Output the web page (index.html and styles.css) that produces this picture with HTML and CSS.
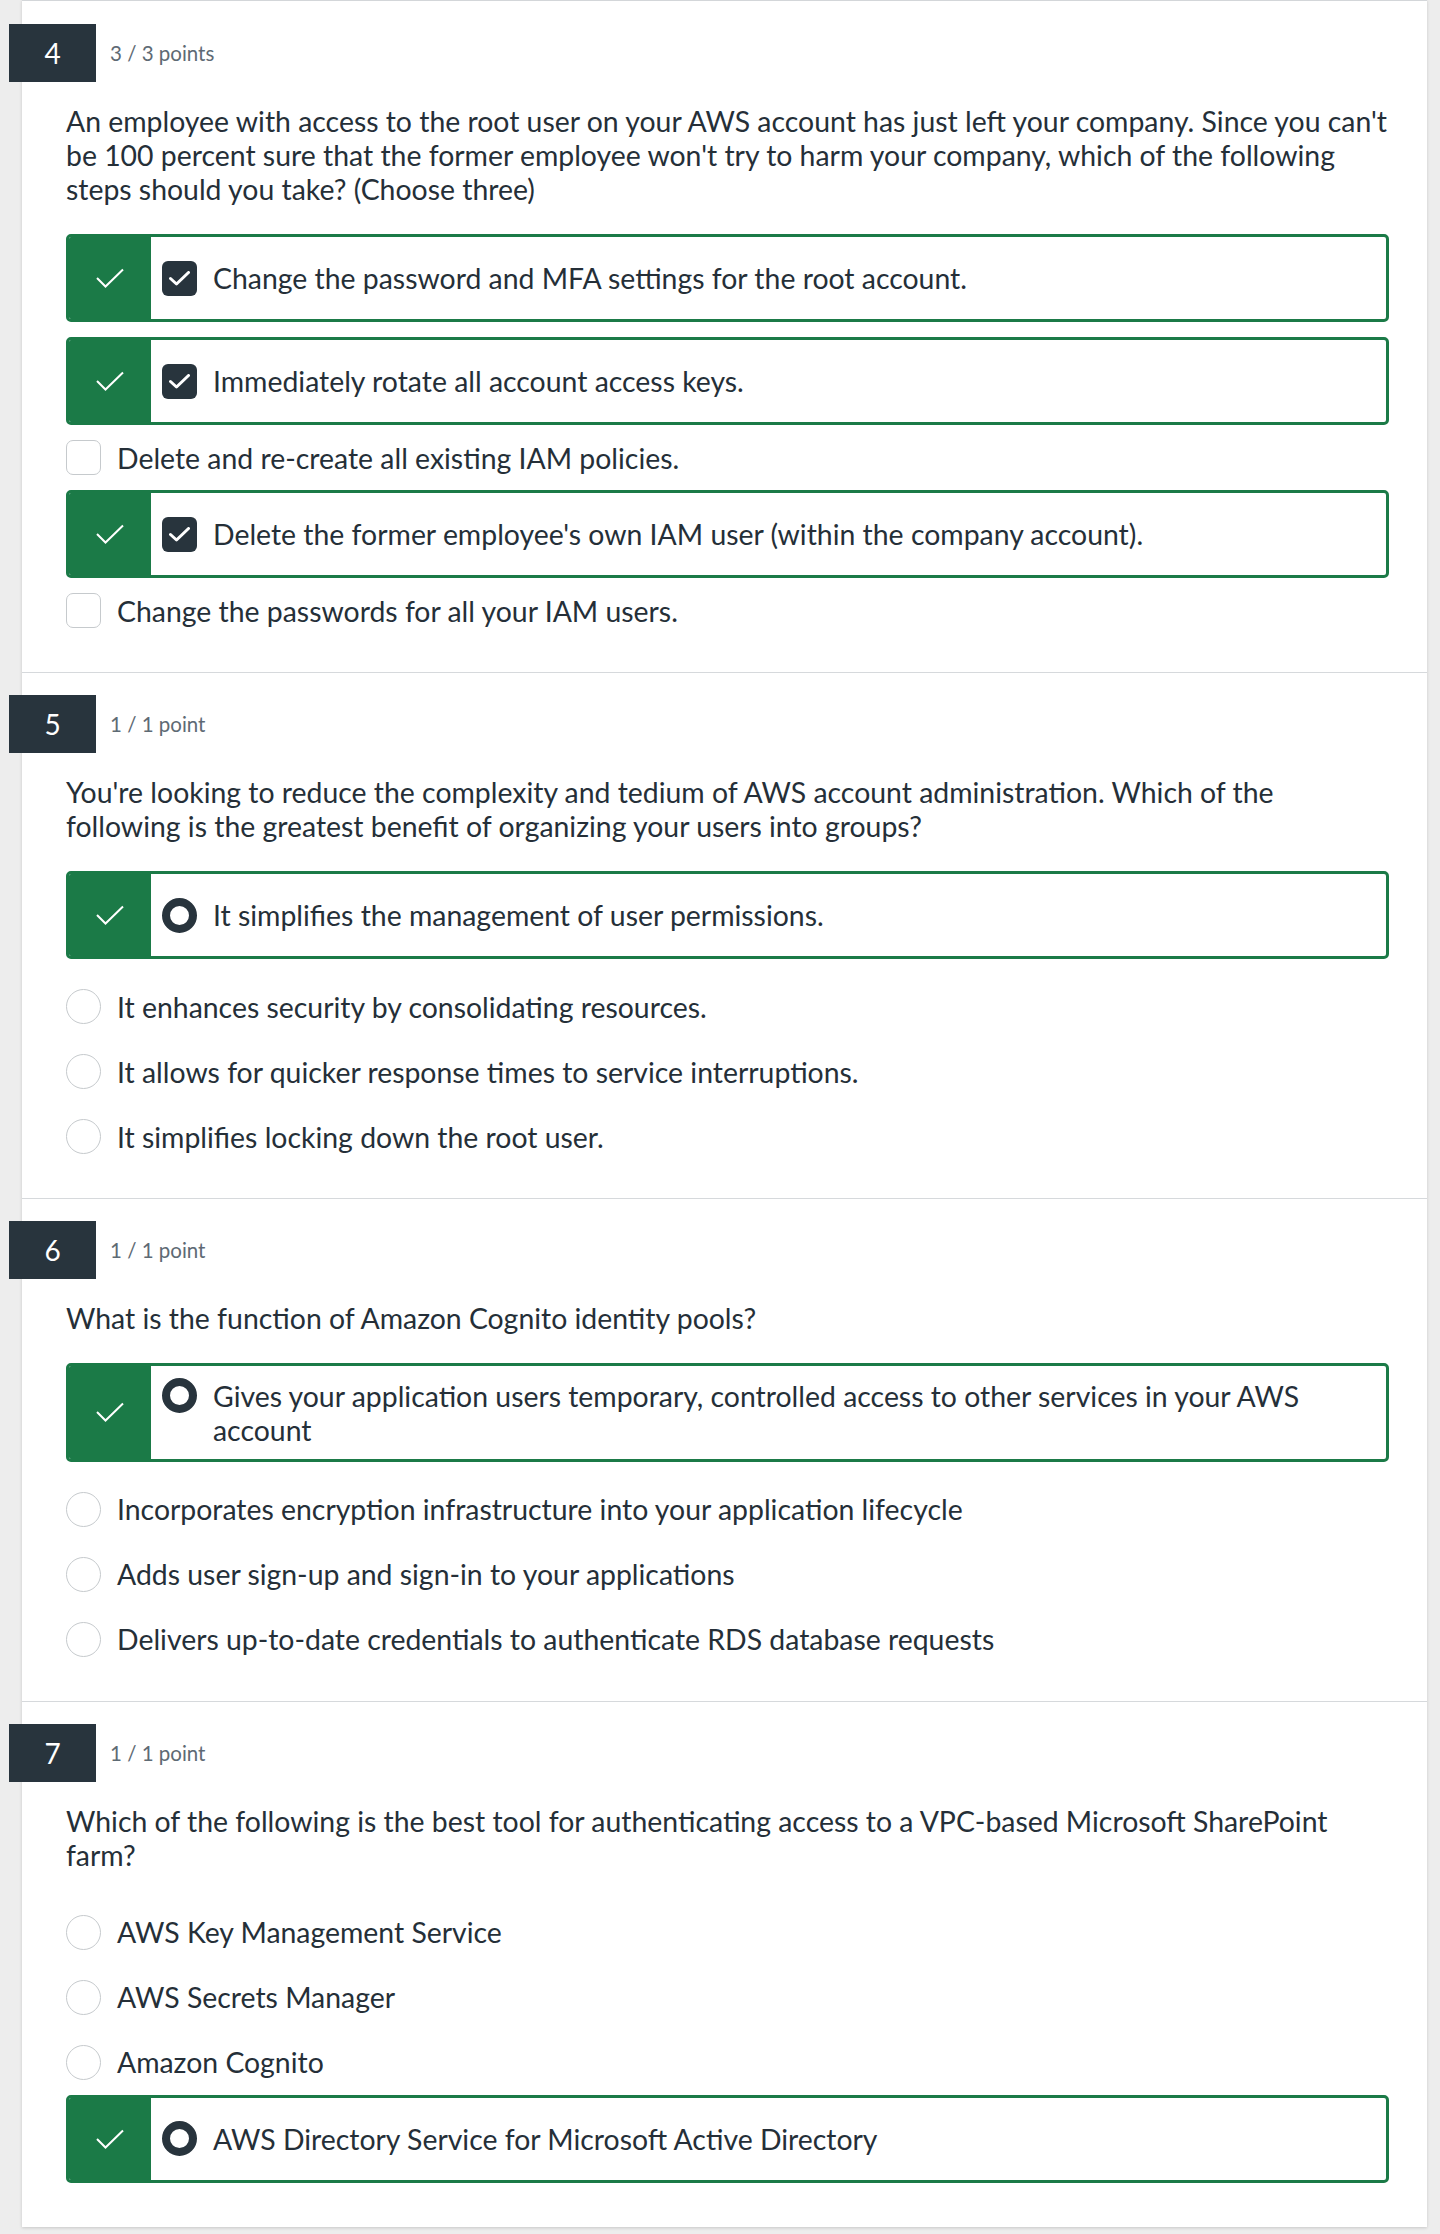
FILE: index.html
```html
<!DOCTYPE html>
<html lang="en">
<head>
<meta charset="utf-8">
<title>Quiz results</title>
<link rel="stylesheet" href="styles.css">
</head>
<body>
<main class="quiz">

  <section class="question">
    <header class="q-head">
      <div class="q-num">4</div>
      <div class="q-points">3 / 3 points</div>
    </header>
    <p class="q-text">An employee with access to the root user on your AWS account has just left your company. Since you can't be 100 percent sure that the former employee won't try to harm your company, which of the following steps should you take? (Choose three)</p>
    <ul class="options">
      <li class="opt correct">
        <div class="opt-mark"><svg class="tick" viewBox="0 0 28 20"><polyline points="1,10 9.5,18.5 27,1.5"/></svg></div>
        <div class="opt-body"><span class="cb checked"><svg viewBox="0 0 21 15"><polyline points="1.5,7.5 7.5,13 19.5,1.5"/></svg></span><span class="opt-label">Change the password and MFA settings for the root account.</span></div>
      </li>
      <li class="opt correct">
        <div class="opt-mark"><svg class="tick" viewBox="0 0 28 20"><polyline points="1,10 9.5,18.5 27,1.5"/></svg></div>
        <div class="opt-body"><span class="cb checked"><svg viewBox="0 0 21 15"><polyline points="1.5,7.5 7.5,13 19.5,1.5"/></svg></span><span class="opt-label">Immediately rotate all account access keys.</span></div>
      </li>
      <li class="opt plain"><span class="cb"></span><span class="opt-label">Delete and re-create all existing IAM policies.</span></li>
      <li class="opt correct">
        <div class="opt-mark"><svg class="tick" viewBox="0 0 28 20"><polyline points="1,10 9.5,18.5 27,1.5"/></svg></div>
        <div class="opt-body"><span class="cb checked"><svg viewBox="0 0 21 15"><polyline points="1.5,7.5 7.5,13 19.5,1.5"/></svg></span><span class="opt-label">Delete the former employee's own IAM user (within the company account).</span></div>
      </li>
      <li class="opt plain"><span class="cb"></span><span class="opt-label">Change the passwords for all your IAM users.</span></li>
    </ul>
  </section>

  <section class="question">
    <header class="q-head">
      <div class="q-num">5</div>
      <div class="q-points">1 / 1 point</div>
    </header>
    <p class="q-text">You're looking to reduce the complexity and tedium of AWS account administration. Which of the following is the greatest benefit of organizing your users into groups?</p>
    <ul class="options radios">
      <li class="opt correct">
        <div class="opt-mark"><svg class="tick" viewBox="0 0 28 20"><polyline points="1,10 9.5,18.5 27,1.5"/></svg></div>
        <div class="opt-body"><span class="rd checked"></span><span class="opt-label">It simplifies the management of user permissions.</span></div>
      </li>
      <li class="opt plain"><span class="rd"></span><span class="opt-label">It enhances security by consolidating resources.</span></li>
      <li class="opt plain"><span class="rd"></span><span class="opt-label">It allows for quicker response times to service interruptions.</span></li>
      <li class="opt plain"><span class="rd"></span><span class="opt-label">It simplifies locking down the root user.</span></li>
    </ul>
  </section>

  <section class="question">
    <header class="q-head">
      <div class="q-num">6</div>
      <div class="q-points">1 / 1 point</div>
    </header>
    <p class="q-text">What is the function of Amazon Cognito identity pools?</p>
    <ul class="options radios">
      <li class="opt correct">
        <div class="opt-mark"><svg class="tick" viewBox="0 0 28 20"><polyline points="1,10 9.5,18.5 27,1.5"/></svg></div>
        <div class="opt-body"><span class="rd checked"></span><span class="opt-label">Gives your application users temporary, controlled access to other services in your AWS account</span></div>
      </li>
      <li class="opt plain"><span class="rd"></span><span class="opt-label">Incorporates encryption infrastructure into your application lifecycle</span></li>
      <li class="opt plain"><span class="rd"></span><span class="opt-label">Adds user sign-up and sign-in to your applications</span></li>
      <li class="opt plain"><span class="rd"></span><span class="opt-label">Delivers up-to-date credentials to authenticate RDS database requests</span></li>
    </ul>
  </section>

  <section class="question">
    <header class="q-head">
      <div class="q-num">7</div>
      <div class="q-points">1 / 1 point</div>
    </header>
    <p class="q-text">Which of the following is the best tool for authenticating access to a VPC-based Microsoft SharePoint farm?</p>
    <ul class="options radios">
      <li class="opt plain"><span class="rd"></span><span class="opt-label">AWS Key Management Service</span></li>
      <li class="opt plain"><span class="rd"></span><span class="opt-label">AWS Secrets Manager</span></li>
      <li class="opt plain"><span class="rd"></span><span class="opt-label">Amazon Cognito</span></li>
      <li class="opt correct">
        <div class="opt-mark"><svg class="tick" viewBox="0 0 28 20"><polyline points="1,10 9.5,18.5 27,1.5"/></svg></div>
        <div class="opt-body"><span class="rd checked"></span><span class="opt-label">AWS Directory Service for Microsoft Active Directory</span></div>
      </li>
    </ul>
  </section>

</main>
</body>
</html>
```

FILE: styles.css
```css
* {
  box-sizing: border-box;
}

html, body {
  margin: 0;
  padding: 0;
}

body {
  background: #ededed;
  font-family: Lato, "Noto Sans", "Liberation Sans", sans-serif;
  color: #252f38;
  padding-bottom: 9px;
}

.quiz {
  margin-left: 22px;
  width: 1405px;
  background: #ffffff;
  border-top: 1px solid #d3d6d9;
  box-shadow: 0 1px 3px rgba(0, 0, 0, 0.16);
}

.question {
  padding: 23px 38px 44px 44px;
}

.question + .question {
  border-top: 1px solid #d6d9dc;
  padding-top: 22px;
}

.q-head {
  display: flex;
  align-items: center;
  margin-left: -57px;
  height: 58px;
}

.q-num {
  width: 87px;
  height: 58px;
  background: #28343d;
  color: #ffffff;
  font-size: 28px;
  display: flex;
  align-items: center;
  justify-content: center;
}

.q-points {
  margin-left: 14px;
  font-size: 20.5px;
  color: #5e6a74;
}

.q-text {
  margin: 22px 0 0;
  font-size: 28.4px;
  line-height: 34px;
}

.options {
  list-style: none;
  margin: 28px 0 0;
  padding: 0;
  display: flex;
  flex-direction: column;
  gap: 15px;
}

.opt {
  font-size: 28.4px;
  line-height: 34px;
}

.opt.correct {
  display: flex;
  min-height: 88px;
  border: 3px solid #1b7a47;
  border-radius: 5px;
  overflow: hidden;
}

.opt-mark {
  width: 82px;
  flex: none;
  background: #1b7a47;
  display: flex;
  align-items: center;
  justify-content: center;
}

.tick {
  width: 28px;
  height: 20px;
  fill: none;
  stroke: #ffffff;
  stroke-width: 2;
}

.opt-body {
  align-self: center;
  display: flex;
  align-items: flex-start;
  gap: 16px;
  padding: 12px 16px 12px 11px;
}

.opt-label {
  padding-top: 0.5px;
}

.opt.plain {
  display: flex;
  align-items: center;
  gap: 16px;
  min-height: 35px;
}

.radios .opt.plain {
  margin-top: 15px;
}

.cb,
.rd {
  flex: none;
  width: 35px;
  height: 35px;
  border: 1px solid #c6cacd;
  background: #ffffff;
}

.cb {
  border-radius: 7px;
}

.rd {
  border-radius: 50%;
}

.cb.checked {
  border: none;
  border-radius: 6px;
  background: #28343d;
  display: flex;
  align-items: center;
  justify-content: center;
}

.cb.checked svg {
  width: 21px;
  height: 15px;
  fill: none;
  stroke: #ffffff;
  stroke-width: 3;
  stroke-linecap: round;
  stroke-linejoin: round;
}

.rd.checked {
  border: 8px solid #28343d;
}
```
